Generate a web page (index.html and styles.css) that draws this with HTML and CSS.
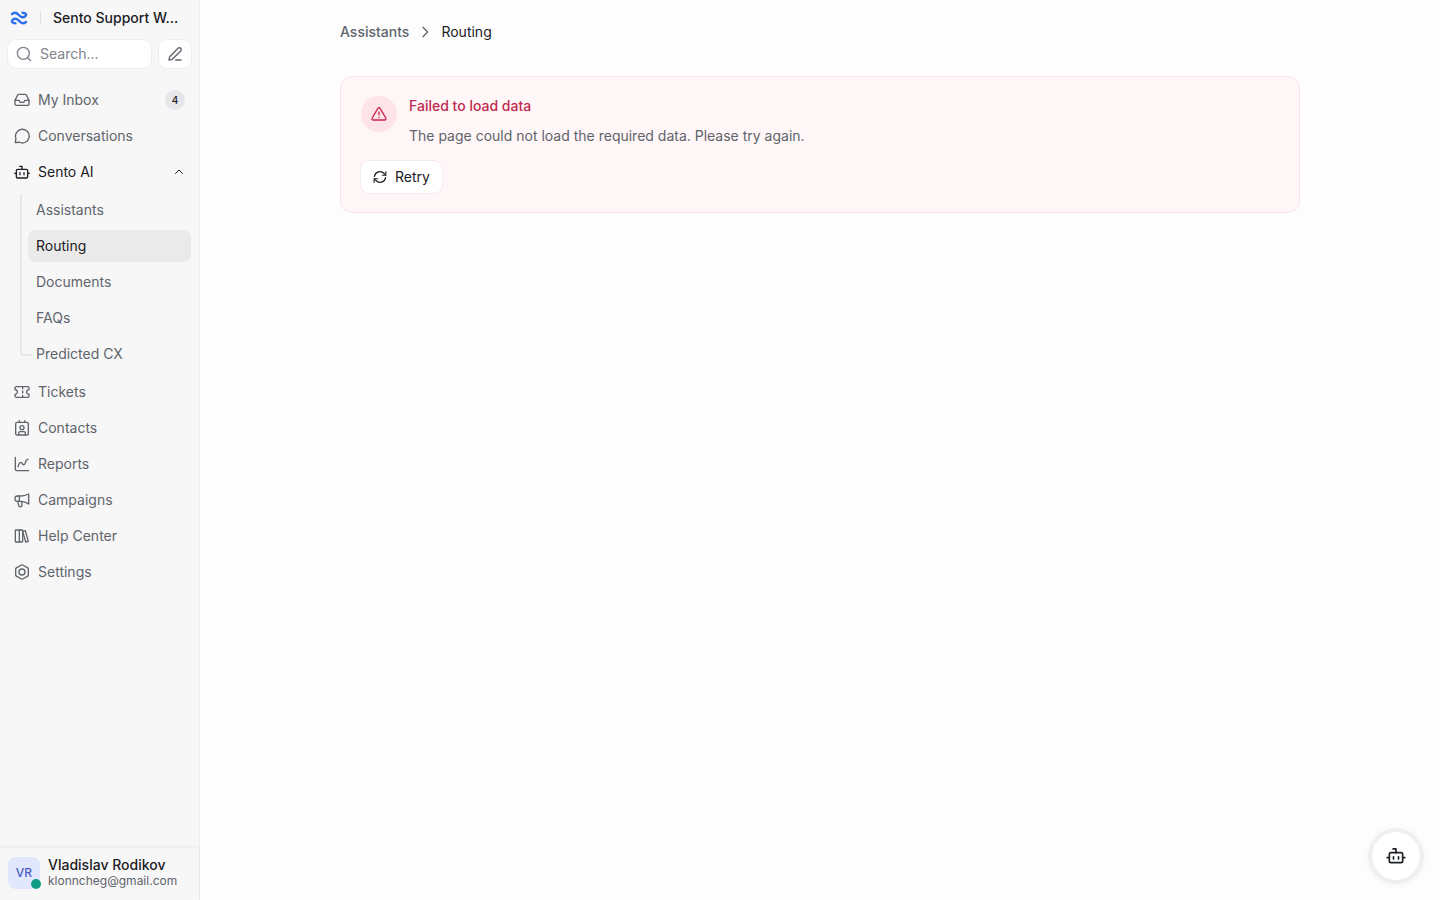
FILE: index.html
```html
<!DOCTYPE html>
<html lang="en">
<head>
    <meta charset="UTF-8">
    <meta name="viewport" content="width=device-width, initial-scale=1.0">
    <title>Routing - Sento Support</title>
    <link rel="stylesheet" href="styles.css">
</head>
<body>
    <aside class="sidebar">
        <header class="workspace">
            <svg class="logo" viewBox="0 0 18 16" aria-hidden="true">
                <path d="M2 4C4.500 2 6.500 2.500 8.500 4.800S12.800 8 15.300 6.200C17 4.600 15.800 2.800 12.600 2.800"/>
                <path d="M16 12C13.500 14 11.500 13.500 9.500 11.200S5.200 8 2.700 9.800C1 11.400 2.200 13.200 5.400 13.200"/>
            </svg>
            <span class="divider"></span>
            <span class="workspace-name">Sento Support W...</span>
        </header>

        <div class="search-row">
            <label class="search">
                <svg class="icon" viewBox="0 0 24 24" aria-hidden="true"><circle cx="11" cy="11" r="9"/><path d="m22 22-4.500-4.500"/></svg>
                <input type="text" placeholder="Search..." aria-label="Search">
            </label>
            <button class="compose" aria-label="New message">
                <svg class="icon" viewBox="0 0 24 24" aria-hidden="true"><path d="M13 21h8"/><path d="M16.500 3.500a2.500 2.500 0 0 1 4 4L8 20l-5 1 1-5z"/></svg>
            </button>
        </div>

        <nav class="nav">
            <a class="nav-item" href="#">
                <svg class="icon" viewBox="0 0 24 24" aria-hidden="true"><path d="M1.500 12.500h6l2 3h5l2-3h6"/><path d="M5.500 4.500 1.500 12.500V18a2 2 0 0 0 2 2h17a2 2 0 0 0 2-2v-5.500l-4-8a2 2 0 0 0-1.800-1H7.300a2 2 0 0 0-1.800 1z"/></svg>
                <span>My Inbox</span>
                <span class="badge">4</span>
            </a>
            <a class="nav-item" href="#">
                <svg class="icon" viewBox="0 0 24 24" aria-hidden="true"><path d="M2 22l.8-6.500A10.300 10.300 0 1 1 8 21.400z"/></svg>
                <span>Conversations</span>
            </a>
            <button class="nav-item open" aria-expanded="true">
                <svg class="icon" viewBox="0 0 24 24" aria-hidden="true"><path d="M12 8V3.500H8.500"/><rect x="3.500" y="8" width="17" height="13" rx="2"/><path d="M1 14h2.500M20.500 14H23M9 13v3M15 13v3"/></svg>
                <span>Sento AI</span>
                <svg class="chevron" viewBox="0 0 24 24" aria-hidden="true"><path d="m5 15 7-7 7 7"/></svg>
            </button>
            <div class="subnav">
                <a class="sub-item" href="#">Assistants</a>
                <a class="sub-item active" href="#" aria-current="page">Routing</a>
                <a class="sub-item" href="#">Documents</a>
                <a class="sub-item" href="#">FAQs</a>
                <a class="sub-item" href="#">Predicted CX</a>
            </div>
            <a class="nav-item" href="#">
                <svg class="icon" viewBox="0 0 24 24" aria-hidden="true"><path d="M1.500 8.500V6a2 2 0 0 1 2-2h17a2 2 0 0 1 2 2v2.500a3.500 3.500 0 0 0 0 7V18a2 2 0 0 1-2 2h-17a2 2 0 0 1-2-2v-2.500a3.500 3.500 0 0 0 0-7z"/><path d="M13 4v3M13 10.500v3M13 17v3"/></svg>
                <span>Tickets</span>
            </a>
            <a class="nav-item" href="#">
                <svg class="icon" viewBox="0 0 24 24" aria-hidden="true"><rect x="2.500" y="3.500" width="19" height="19" rx="2"/><path d="M8 1v2.500M16 1v2.500M7 22v-2.500a2 2 0 0 1 2-2h6a2 2 0 0 1 2 2V22"/><circle cx="12" cy="11.500" r="3"/></svg>
                <span>Contacts</span>
            </a>
            <a class="nav-item" href="#">
                <svg class="icon" viewBox="0 0 24 24" aria-hidden="true"><path d="M2 2v18a2 2 0 0 0 2 2h18"/><path d="M6 16c2-6 4-8 6-5s4 3 5-1 2-5 4-5"/></svg>
                <span>Reports</span>
            </a>
            <a class="nav-item" href="#">
                <svg class="icon" viewBox="0 0 24 24" aria-hidden="true"><path d="M22 3v15c-4-3-7-4-11-4H5a3.500 3.500 0 0 1-3.500-3.500v-1A3.500 3.500 0 0 1 5 6h6c4 0 7-1 11-3z"/><path d="M8 6v8M5.500 14l1.500 6a2.500 2.500 0 0 0 5-.5L11.500 14"/></svg>
                <span>Campaigns</span>
            </a>
            <a class="nav-item" href="#">
                <svg class="icon" viewBox="0 0 24 24" aria-hidden="true"><rect x="2" y="3" width="6" height="18" rx="1"/><path d="M8 3h4a1 1 0 0 1 1 1v16a1 1 0 0 1-1 1H8"/><path d="m13 5 4-1 4.500 16-4 1z"/></svg>
                <span>Help Center</span>
            </a>
            <a class="nav-item" href="#">
                <svg class="icon" viewBox="0 0 24 24" aria-hidden="true"><path d="M11 1.500a2 2 0 0 1 2 0l7.500 4.300a2 2 0 0 1 1 1.700v9a2 2 0 0 1-1 1.700L13 22.500a2 2 0 0 1-2 0l-7.500-4.300a2 2 0 0 1-1-1.700v-9a2 2 0 0 1 1-1.700z"/><circle cx="12" cy="12" r="4.500"/></svg>
                <span>Settings</span>
            </a>
        </nav>

        <footer class="user">
            <div class="avatar">VR<span class="status"></span></div>
            <div class="user-info">
                <div class="user-name">Vladislav Rodikov</div>
                <div class="user-email">klonncheg@gmail.com</div>
            </div>
        </footer>
    </aside>

    <main class="content">
        <div class="container">
            <nav class="breadcrumb" aria-label="Breadcrumb">
                <a href="#">Assistants</a>
                <svg class="icon" viewBox="0 0 24 24" aria-hidden="true"><path d="m9 5 7 7-7 7"/></svg>
                <span>Routing</span>
            </nav>

            <section class="alert" role="alert">
                <div class="alert-head">
                    <div class="alert-icon">
                        <svg class="icon" viewBox="0 0 24 24" aria-hidden="true"><path d="M10.300 3.500a2 2 0 0 1 3.400 0l8.500 14.500a2 2 0 0 1-1.700 3h-17a2 2 0 0 1-1.700-3z"/><path d="M12 9v4.500M12 17v.1"/></svg>
                    </div>
                    <div>
                        <h1 class="alert-title">Failed to load data</h1>
                        <p class="alert-text">The page could not load the required data. Please try again.</p>
                    </div>
                </div>
                <button class="retry">
                    <svg class="retry-icon" viewBox="0 0 24 24" aria-hidden="true"><path d="M2.500 11a9.500 9.500 0 0 1 16.500-5l2.500 3"/><path d="M22 3v6h-6M21.500 13A9.500 9.500 0 0 1 5 18l-2.500-3"/><path d="M2 21v-6h6"/></svg>
                    Retry
                </button>
            </section>
        </div>
    </main>

    <button class="assistant-btn" aria-label="Open assistant">
        <svg class="icon" viewBox="0 0 24 24" aria-hidden="true"><path d="M12 8V3.500H8.500"/><rect x="4" y="8" width="16" height="12" rx="2"/><path d="M1.500 14H4M20 14h2.500M9 13v2.500M15 13v2.500"/></svg>
    </button>
</body>
</html>
```
FILE: styles.css
```css
:root {
    --bg: #fdfdfe;
    --sidebar-bg: #f7f7f7;
    --border: #ececee;
    --text: #1c2024;
    --muted: #60646c;
    --danger: #ca244d;
}

* {
    margin: 0;
    padding: 0;
    box-sizing: border-box;
}

body {
    background: var(--bg);
    color: var(--text);
    font-family: 'Inter', system-ui, sans-serif;
    font-size: 14px;
    line-height: 20px;
    min-height: 100vh;
    display: flex;
}

button,
input {
    font: inherit;
    color: inherit;
    border: none;
    background: none;
}

button {
    cursor: pointer;
}

a {
    color: inherit;
    text-decoration: none;
}

svg {
    fill: none;
    stroke: currentColor;
    stroke-width: 2;
    stroke-linecap: round;
    stroke-linejoin: round;
    flex-shrink: 0;
}

.icon {
    width: 16px;
    height: 16px;
}

/* Sidebar */
.sidebar {
    width: 200px;
    height: 100vh;
    position: sticky;
    top: 0;
    flex-shrink: 0;
    display: flex;
    flex-direction: column;
    background: var(--sidebar-bg);
    border-right: 1px solid var(--border);
}

.workspace {
    display: flex;
    align-items: center;
    gap: 12px;
    height: 36px;
    padding: 0 12px 0 10px;
}

.logo {
    width: 18px;
    height: 16px;
    color: #2f6fed;
    stroke-width: 2.4;
}

.divider {
    width: 1px;
    height: 12px;
    background: #dfdfe2;
    flex-shrink: 0;
}

.workspace-name {
    font-weight: 500;
    white-space: nowrap;
}

.search-row {
    display: flex;
    gap: 8px;
    padding: 4px 8px 16px;
}

.search,
.compose {
    height: 28px;
    background: #fff;
    border-radius: 8px;
    box-shadow: 0 0 0 1px var(--border);
}

.search {
    flex: 1;
    min-width: 0;
    display: flex;
    align-items: center;
    gap: 8px;
    padding: 0 8px;
    color: #80838d;
}

.search input {
    width: 100%;
    min-width: 0;
    outline: none;
}

.search input::placeholder {
    color: #80838d;
}

.compose {
    width: 32px;
    display: flex;
    align-items: center;
    justify-content: center;
    color: var(--muted);
}

/* Navigation */
.nav {
    flex: 1;
    display: flex;
    flex-direction: column;
    gap: 4px;
    padding: 0 8px;
    color: var(--muted);
}

.nav-item {
    display: flex;
    align-items: center;
    gap: 8px;
    height: 32px;
    padding: 0 6px;
    border-radius: 8px;
}

.nav-item.open {
    color: var(--text);
}

.badge {
    margin-left: auto;
    width: 20px;
    height: 20px;
    border-radius: 50%;
    background: #e6e6ea;
    color: var(--text);
    font-size: 10px;
    font-weight: 500;
    text-align: center;
}

.chevron {
    width: 12px;
    height: 12px;
    margin-left: auto;
}

.subnav {
    position: relative;
    display: flex;
    flex-direction: column;
    gap: 4px;
    padding: 2px 0 2px 20px;
}

/* line that connects the sub items */
.subnav::before {
    content: '';
    position: absolute;
    left: 12px;
    top: 2px;
    bottom: 16px;
    width: 10px;
    border: solid #e8e8e8;
    border-width: 0 0 2px 2px;
    border-bottom-left-radius: 4px;
}

.sub-item {
    height: 32px;
    padding: 6px 8px;
    border-radius: 8px;
}

.sub-item.active {
    background: #eaeaea;
    color: var(--text);
}

/* User */
.user {
    display: flex;
    align-items: center;
    gap: 8px;
    padding: 9px 8px 11px;
    box-shadow: 0 -1px 3px rgba(0, 0, 0, 0.06);
}

.avatar {
    position: relative;
    width: 32px;
    height: 32px;
    border-radius: 8px;
    background: #e1e8fd;
    color: #4a5fc4;
    font-size: 12px;
    font-weight: 500;
    line-height: 32px;
    text-align: center;
}

.status {
    position: absolute;
    right: -1px;
    bottom: 0;
    width: 10px;
    height: 10px;
    border-radius: 50%;
    background: #129b84;
}

.user-name {
    font-weight: 500;
    line-height: 16px;
}

.user-email {
    color: var(--muted);
    font-size: 12px;
    line-height: 16px;
}

/* Content */
.content {
    flex: 1;
    padding: 20px 40px;
}

.container {
    max-width: 960px;
    margin: 0 auto;
}

.breadcrumb {
    display: flex;
    align-items: center;
    gap: 8px;
    height: 24px;
    margin-bottom: 32px;
}

.breadcrumb .icon {
    color: var(--muted);
}

.breadcrumb a {
    color: var(--muted);
    font-weight: 500;
}

.alert {
    padding: 19px 20px;
    background: #fff6f7;
    border: 1px solid #fbe3e8;
    border-radius: 12px;
}

.alert-head {
    display: flex;
    gap: 12px;
    margin-bottom: 13px;
}

.alert-icon {
    width: 36px;
    height: 36px;
    border-radius: 50%;
    background: #fee4e9;
    color: var(--danger);
    display: flex;
    align-items: center;
    justify-content: center;
    flex-shrink: 0;
}

.alert-title {
    color: #c02a50;
    font-size: 14px;
    font-weight: 500;
    margin-bottom: 8px;
}

.alert-text {
    color: var(--muted);
    line-height: 24px;
}

.retry {
    display: flex;
    align-items: center;
    gap: 8px;
    height: 32px;
    padding: 0 12px;
    background: #fff;
    border-radius: 8px;
    box-shadow: 0 0 0 1px #f6eaec;
}

.retry-icon {
    width: 14px;
    height: 14px;
}

/* Floating assistant button */
.assistant-btn {
    position: fixed;
    right: 20px;
    bottom: 20px;
    width: 48px;
    height: 48px;
    border-radius: 50%;
    background: #fff;
    box-shadow: 0 0 0 4px #efeff0, 0 1px 6px 4px rgba(0, 0, 0, 0.04);
    display: flex;
    align-items: center;
    justify-content: center;
}

.assistant-btn .icon {
    width: 20px;
    height: 20px;
}
```
